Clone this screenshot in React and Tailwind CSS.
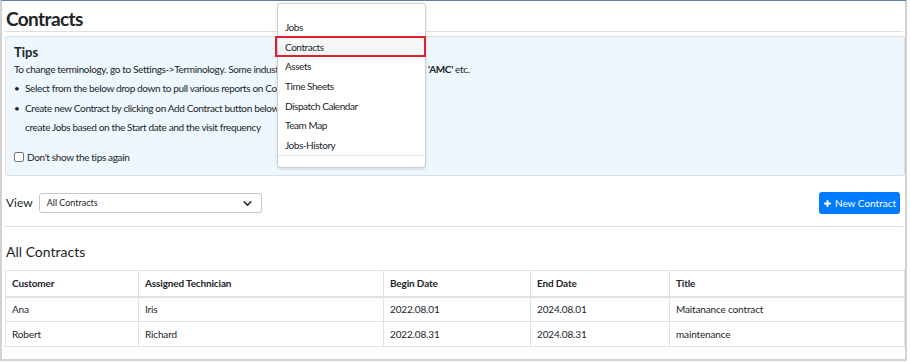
import { Plus, ChevronDown } from "lucide-react";

const rows = [
  { customer: "Ana", tech: "Iris", begin: "2022.08.01", end: "2024.08.01", title: "Maitanance contract" },
  { customer: "Robert", tech: "Richard", begin: "2022.08.31", end: "2024.08.31", title: "maintenance" },
];

const menu = ["Jobs", "Contracts", "Assets", "Time Sheets", "Dispatch Calendar", "Team Map", "Jobs-History"];

export default function App() {
  return (
    <div
      className="relative w-[907px] h-[361px] bg-white border-t border-t-[#5b7fa6] border-l-2 border-r-2 border-b-2 border-l-[#d2d2d2] border-r-[#d2d2d2] border-b-[#d2d2d2] text-[#212529] overflow-hidden"
      style={{ fontFamily: "Lato, 'Open Sans', sans-serif" }}
    >
      <div className="pl-[3px] pr-0">
        {/* Header */}
        <h1 className="text-[19px] font-bold leading-[24px] pt-[6px] tracking-[-0.6px] ml-[1px]">Contracts</h1>
        <div className="border-t border-[#dedede] mr-[2px]" />

        {/* Tips */}
        <div className="mt-[4px] bg-[#eef6fe] border border-[#dadee2] rounded-[3px] h-[140px] px-[8px] pt-[6px] tracking-[-0.35px]">
          <div className="text-[13px] font-bold leading-[18px] tracking-normal">Tips</div>
          <div className="flex whitespace-nowrap text-[10px] leading-[14px] mt-[1px]">
            <span className="w-[263px]">To change terminology, go to Settings-&gt;Terminology. Some indust</span>
            <span className="ml-[151px]">
              <b>'AMC'</b> etc.
            </span>
          </div>
          <ul className="text-[10px] leading-[19.5px] mt-[3px] whitespace-nowrap">
            <li className="flex">
              <span className="w-[11px]">•</span>
              <span>Select from the below drop down to pull various reports on Con</span>
            </li>
            <li className="flex">
              <span className="w-[11px]">•</span>
              <span>Create new Contract by clicking on Add Contract button below.</span>
            </li>
            <li className="pl-[11px]">create Jobs based on the Start date and the visit frequency</li>
          </ul>
          <label className="flex items-center gap-[3px] mt-[12px] text-[10px]">
            <span className="w-[10px] h-[10px] border border-[#767676] rounded-[2px] bg-white" />
            Don't show the tips again
          </label>
        </div>

        {/* View row */}
        <div className="flex items-center justify-between mt-[16px] pr-[5px]">
          <div className="flex items-center gap-[6px]">
            <span className="text-[12px] leading-[16px] ml-[1px]">View</span>
            <div className="w-[223px] h-[20px] border border-[#c8c8c8] rounded-[3px] flex items-center justify-between px-[7px]">
              <span className="text-[9px]">All Contracts</span>
              <ChevronDown size={13} strokeWidth={3} className="text-[#333]" />
            </div>
          </div>
          <button className="w-[81px] h-[22px] bg-[#007bff] rounded-[3px] text-white text-[10px] flex items-center justify-center gap-[3px]">
            <Plus size={9} strokeWidth={5} />
            New Contract
          </button>
        </div>
        <div className="border-t border-[#dedede] mt-[12px] mr-[2px]" />

        {/* All Contracts */}
        <h2 className="text-[14px] leading-[20px] mt-[15px] ml-[1px]">All Contracts</h2>
        <table className="mt-[8px] w-[900px] border-collapse text-[10px] tracking-[-0.15px]">
          <thead>
            <tr className="h-[26px] text-left">
              <th className="w-[133px] border border-[#dee2e6] border-b-2 font-bold px-[6px]">Customer</th>
              <th className="w-[245px] border border-[#dee2e6] border-b-2 font-bold px-[6px]">Assigned Technician</th>
              <th className="w-[147px] border border-[#dee2e6] border-b-2 font-bold px-[6px]">Begin Date</th>
              <th className="w-[139px] border border-[#dee2e6] border-b-2 font-bold px-[6px]">End Date</th>
              <th className="border border-[#dee2e6] border-b-2 font-bold px-[6px]">Title</th>
            </tr>
          </thead>
          <tbody>
            {rows.map((r) => (
              <tr key={r.customer} className="h-[25px]">
                <td className="border border-[#dee2e6] px-[6px]">{r.customer}</td>
                <td className="border border-[#dee2e6] px-[6px]">{r.tech}</td>
                <td className="border border-[#dee2e6] px-[6px]">{r.begin}</td>
                <td className="border border-[#dee2e6] px-[6px]">{r.end}</td>
                <td className="border border-[#dee2e6] px-[6px]">{r.title}</td>
              </tr>
            ))}
          </tbody>
        </table>
      </div>

      {/* Dropdown menu overlay */}
      <div className="absolute left-[275px] top-[2px] w-[149px] h-[165px] bg-white border border-[#cfcfcf] rounded-[3px] shadow-[0_1px_3px_rgba(0,0,0,0.12)]">
        <div className="pt-[14px]">
          {menu.map((m) => (
            <div
              key={m}
              className={`h-[19.6px] flex items-center px-[7px] text-[10px] tracking-[-0.45px] ${
                m === "Contracts" ? "bg-[#f6f7f8]" : ""
              }`}
            >
              {m}
            </div>
          ))}
        </div>
        <div className="border-t border-[#e2e2e2]" />
      </div>

      {/* Red highlight box */}
      <div className="absolute left-[273px] top-[35px] w-[151px] h-[21px] border-2 border-[#e0202c]" />
    </div>
  );
}
